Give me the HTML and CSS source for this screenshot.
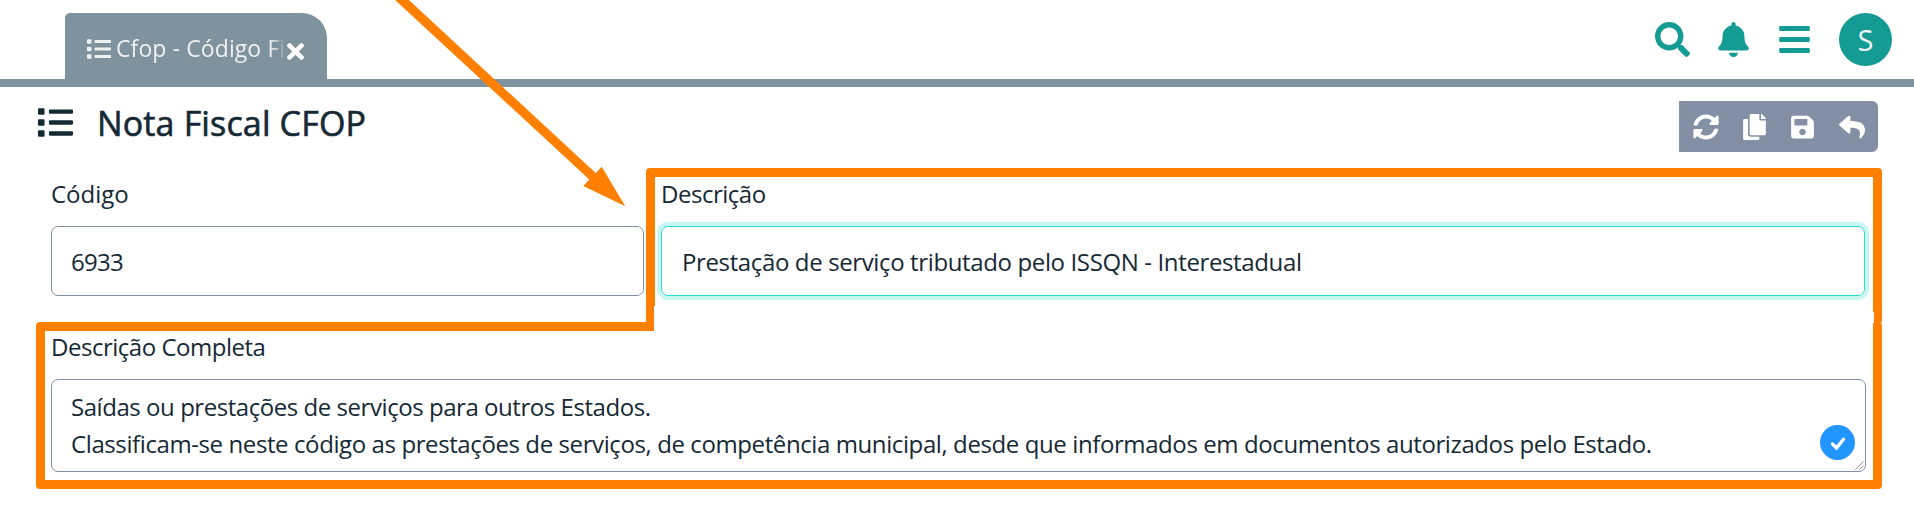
FILE: index.html
```html
<!DOCTYPE html>
<html lang="pt-BR">
<head>
<meta charset="utf-8">
<title>Nota Fiscal CFOP</title>
<link rel="stylesheet" href="styles.css">
</head>
<body>
<svg class="symbols" aria-hidden="true">
  <symbol id="list" viewBox="0 0 512 512"><path d="M80 368H16a16 16 0 0 0-16 16v64a16 16 0 0 0 16 16h64a16 16 0 0 0 16-16v-64a16 16 0 0 0-16-16zm0-320H16A16 16 0 0 0 0 64v64a16 16 0 0 0 16 16h64a16 16 0 0 0 16-16V64a16 16 0 0 0-16-16zm0 160H16a16 16 0 0 0-16 16v64a16 16 0 0 0 16 16h64a16 16 0 0 0 16-16v-64a16 16 0 0 0-16-16zm416 176H176a16 16 0 0 0-16 16v32a16 16 0 0 0 16 16h320a16 16 0 0 0 16-16v-32a16 16 0 0 0-16-16zm0-320H176a16 16 0 0 0-16 16v32a16 16 0 0 0 16 16h320a16 16 0 0 0 16-16V80a16 16 0 0 0-16-16zm0 160H176a16 16 0 0 0-16 16v32a16 16 0 0 0 16 16h320a16 16 0 0 0 16-16v-32a16 16 0 0 0-16-16z"/></symbol>
</svg>
<header class="topbar">
  <div class="tab">
    <svg class="tab-icon"><use href="#list"/></svg>
    <span class="tab-label">Cfop - Código Fis</span>
    <svg class="tab-close" viewBox="0 0 352 352"><path d="M243 176l100-100c12-12 12-32 0-44l-22-23c-13-12-32-12-45 0L176 110 76 9C63-3 44-3 31 9L9 32c-12 12-12 32 0 44l100 100L9 276c-12 13-12 32 0 45l22 22c13 12 32 12 45 0l100-100 100 100c13 12 32 12 45 0l22-22c12-13 12-32 0-45z"/></svg>
  </div>
  <nav class="actions">
    <svg class="a-search" viewBox="0 0 512 512"><path d="M505 442.700 405.300 343c-4.500-4.500-10.600-7-17-7H372c27.600-35.300 44-79.700 44-128C416 93.100 322.900 0 208 0S0 93.100 0 208s93.100 208 208 208c48.300 0 92.700-16.400 128-44v16.300c0 6.400 2.500 12.500 7 17l99.700 99.700c9.400 9.400 24.600 9.400 33.900 0l28.300-28.300c9.400-9.400 9.400-24.600.1-34zM208 336c-70.700 0-128-57.200-128-128 0-70.700 57.200-128 128-128 70.700 0 128 57.200 128 128 0 70.700-57.200 128-128 128z"/></svg>
    <svg class="a-bell" viewBox="0 0 448 512"><path d="M224 512c35.320 0 63.970-28.650 63.970-64H160.030c0 35.350 28.650 64 63.970 64zm215.390-149.710c-19.320-20.760-55.470-51.990-55.470-154.290 0-77.700-54.480-139.900-127.940-155.160V32c0-17.670-14.320-32-31.980-32s-31.980 14.330-31.980 32v20.840C118.560 68.100 64.080 130.300 64.080 208c0 102.300-36.150 133.530-55.470 154.290-6 6.450-8.660 14.160-8.610 21.710.11 16.400 12.980 32 32.100 32h383.800c19.120 0 32-15.600 32.100-32 .05-7.550-2.610-15.270-8.610-21.710z"/></svg>
    <svg class="a-bars" viewBox="0 0 448 512"><path d="M16 132h416c8.837 0 16-7.163 16-16V76c0-8.837-7.163-16-16-16H16C7.163 60 0 67.163 0 76v40c0 8.837 7.163 16 16 16zm0 160h416c8.837 0 16-7.163 16-16v-40c0-8.837-7.163-16-16-16H16c-8.837 0-16 7.163-16 16v40c0 8.837 7.163 16 16 16zm0 160h416c8.837 0 16-7.163 16-16v-40c0-8.837-7.163-16-16-16H16c-8.837 0-16 7.163-16 16v40c0 8.837 7.163 16 16 16z"/></svg>
    <span class="avatar">S</span>
  </nav>
</header>
<main class="page">
  <div class="heading">
    <svg class="heading-icon"><use href="#list"/></svg>
    <h1>Nota Fiscal CFOP</h1>
    <div class="toolbar">
      <svg class="t-sync" viewBox="0 0 512 512"><path d="M370.720 133.280C339.458 104.008 298.888 87.962 255.848 88c-77.458.068-144.328 53.178-162.791 126.850-1.344 5.363-6.122 9.150-11.651 9.150H24.103c-7.498 0-13.194-6.807-11.807-14.176C33.933 94.924 134.813 8 256 8c66.448 0 126.791 26.136 171.315 68.685L463.030 40.970C478.149 25.851 504 36.559 504 57.941V192c0 13.255-10.745 24-24 24H345.941c-21.382 0-32.090-25.851-16.971-40.971l41.750-41.749zM32 296h134.059c21.382 0 32.090 25.851 16.971 40.971l-41.750 41.750c31.262 29.273 71.835 45.319 114.876 45.280 77.418-.070 144.315-53.144 162.787-126.849 1.344-5.363 6.122-9.150 11.651-9.150h57.304c7.498 0 13.194 6.807 11.807 14.176C478.067 417.076 377.187 504 256 504c-66.448 0-126.791-26.136-171.315-68.685L48.970 471.030C33.851 486.149 8 475.441 8 454.059V320c0-13.255 10.745-24 24-24z"/></svg>
      <svg class="t-copy" viewBox="0 0 448 512"><path d="M320 448v40c0 13.255-10.745 24-24 24H24c-13.255 0-24-10.745-24-24V120c0-13.255 10.745-24 24-24h72v296c0 30.879 25.121 56 56 56h168zm0-344V0H152c-13.255 0-24 10.745-24 24v368c0 13.255 10.745 24 24 24h272c13.255 0 24-10.745 24-24V128H344c-13.200 0-24-10.800-24-24zm120.971-31.029L375.029 7.029A24 24 0 0 0 358.059 0H352v96h96v-6.059a24 24 0 0 0-7.029-16.970z"/></svg>
      <svg class="t-save" viewBox="0 0 448 512"><path d="M433.941 129.941l-83.882-83.882A48 48 0 0 0 316.118 32H48C21.490 32 0 53.490 0 80v352c0 26.510 21.490 48 48 48h352c26.510 0 48-21.490 48-48V163.882a48 48 0 0 0-14.059-33.941zM224 416c-35.346 0-64-28.654-64-64 0-35.346 28.654-64 64-64s64 28.654 64 64c0 35.346-28.654 64-64 64zm96-304.520V212c0 6.627-5.373 12-12 12H76c-6.627 0-12-5.373-12-12V108c0-6.627 5.373-12 12-12h228.520c3.183 0 6.235 1.264 8.485 3.515l3.480 3.480A11.996 11.996 0 0 1 320 111.480z"/></svg>
      <svg class="t-reply" viewBox="0 0 512 512"><path d="M8.309 189.836L184.313 37.851C199.719 24.546 224 35.347 224 56.015v80.053c160.629 1.839 288 34.032 288 186.258 0 61.441-39.581 122.309-83.333 154.132-13.653 9.931-33.111-2.533-28.077-18.631 45.344-145.012-21.507-183.510-176.590-185.742V360c0 20.700-24.300 31.453-39.687 18.164l-176.004-152c-11.071-9.562-11.086-26.753 0-36.328z"/></svg>
    </div>
  </div>
  <form class="fields">
    <div class="field"><label class="l-code">Código</label><div class="control"><span class="t-code">6933</span></div></div>
    <div class="field"><label>Descrição</label><div class="control focused"><span class="t-desc">Prestação de serviço tributado pelo ISSQN - Interestadual</span></div></div>
    <div class="field full"><label>Descrição Completa</label>
      <div class="control area">
        <p class="t-line1">Saídas ou prestações de serviços para outros Estados.</p>
        <p class="t-line2">Classificam-se neste código as prestações de serviços, de competência municipal, desde que informados em documentos autorizados pelo Estado.</p>
        <svg class="check" viewBox="0 0 35 35"><circle cx="17.500" cy="17.500" r="17.500" fill="#2196ff"/><path d="M12.500 19l4 4 7-8.800" fill="none" stroke="#fff" stroke-width="3.300" stroke-linecap="round" stroke-linejoin="miter"/></svg>
        <svg class="grip" viewBox="0 0 9 9"><path d="M.5 8.500l8-8M4.500 8.500l4-4" stroke="#555" stroke-width="1" stroke-dasharray="1.100 .3"/></svg>
      </div>
    </div>
  </form>
</main>
<svg class="annotation" viewBox="0 0 1914 527" aria-hidden="true">
  <path d="M394 -1h13.800L595.700 173l6-6.300L625.300 206.300 583.300 186l6-6.500z"/>
  <path d="M650 168h1228q4 0 4 4v149l-1 2q1 1 1 3v159q0 4-4 4H40q-4 0-4-4V326q0-4 4-4h606V172q0-4 4-4zM655 177V306h-1v25H45v149h1828V323h1v-10l-1-2V177z" fill-rule="evenodd"/>
</svg>
</body>
</html>
```
FILE: styles.css
```css
* { box-sizing: border-box; }
body {
  margin: 0;
  height: 527px;
  overflow: hidden;
  background: #fff;
  color: #152935;
  font-family: "Open Sans", "Noto Sans", sans-serif;
  font-size: 24px;
}
svg { display: block; flex: none; fill: currentColor; }
.symbols { display: none; }
.topbar {
  display: flex;
  justify-content: space-between;
  height: 87px;
  padding: 13px 22px 0 65px;
  border-bottom: 8px solid #7e939d;
}
.tab {
  display: flex;
  width: 262px;
  height: 66px;
  padding: 0 22px;
  align-items: center;
  border-radius: 5px 25px 0 0;
  background: #7e939d;
  color: #f0f0f0;
}
.tab-icon { width: 24px; height: 24px; margin-top: 5px; }
.tab-label {
  width: 171px;
  margin-left: 5px;
  margin-top: 3px;
  white-space: nowrap;
  font-size: 23px;
  letter-spacing: 0.1px;
  -webkit-mask-image: linear-gradient(90deg, #000 154px, transparent 171px);
  mask-image: linear-gradient(90deg, #000 154px, transparent 171px);
}
.tab-close { width: 17px; height: 17px; margin: 11px 0 0 0; color: #fff; }
.actions { display: flex; height: 53px; align-items: center; color: #149c94; }
.a-search { width: 35px; height: 35px; }
.a-bell { width: 31px; height: 35px; margin-left: 28px; }
.a-bars { width: 31px; height: 35px; margin-left: 30px; }
.avatar {
  display: grid;
  place-items: center;
  width: 53px;
  height: 53px;
  margin-left: 29px;
  border-radius: 50%;
  background: #149c94;
  color: #eef5f5;
  font-size: 29px;
}
.page { padding: 14px 36px 0 38px; }
.heading { display: flex; height: 51px; }
.heading-icon { width: 35px; height: 35px; margin-top: 4px; }
h1 {
  margin: -3px 0 0 24px;
  font-size: 34px;
  line-height: 51px;
  font-weight: 400;
  letter-spacing: 0.15px;
  -webkit-text-stroke: 0.6px currentColor;
}
.toolbar {
  display: flex;
  align-items: center;
  width: 199px;
  height: 51px;
  margin-left: auto;
  padding-left: 14px;
  border-radius: 0 6px 6px 0;
  background: #838fa5;
  color: #fff;
}
.t-sync { width: 26px; height: 26px; }
.t-copy { width: 23px; height: 26px; margin-left: 24px; }
.t-save { width: 23px; height: 26px; margin-left: 25px; }
.t-reply { width: 26px; height: 26px; margin-left: 25px; }
.fields {
  display: grid;
  grid-template-columns: 593px 1204px;
  column-gap: 17px;
  row-gap: 26px;
  padding: 24px 0 0 13px;
}
.full { grid-column: 1 / 3; width: 1815px; }
label {
  display: block;
  height: 50px;
  line-height: 35px;
  white-space: nowrap;
  letter-spacing: -0.48px;
}
.l-code { letter-spacing: 0; }
.full label { height: 57px; line-height: 49px; }
.control {
  position: relative;
  height: 70px;
  padding: 0 19px;
  border: 1px solid #838fa5;
  border-radius: 7px;
  line-height: 69px;
  white-space: nowrap;
}
.focused { padding-left: 20px; border-color: #27dbcf; box-shadow: 0 0 0 4px #c8f6f2; }
.t-code { letter-spacing: -0.7px; }
.t-desc { letter-spacing: -0.37px; }
.t-line1 { letter-spacing: -0.45px; }
.t-line2 { letter-spacing: -0.4px; }
.area { height: 93px; padding-top: 8px; line-height: 37px; }
.area p { margin: 0; }
.check { position: absolute; right: 10px; bottom: 11px; width: 35px; height: 35px; }
.grip { position: absolute; right: 1px; bottom: 1px; width: 9px; height: 9px; }
.annotation {
  position: absolute;
  left: 0;
  top: 0;
  width: 1914px;
  height: 527px;
  fill: #ff8000;
  pointer-events: none;
}
```
